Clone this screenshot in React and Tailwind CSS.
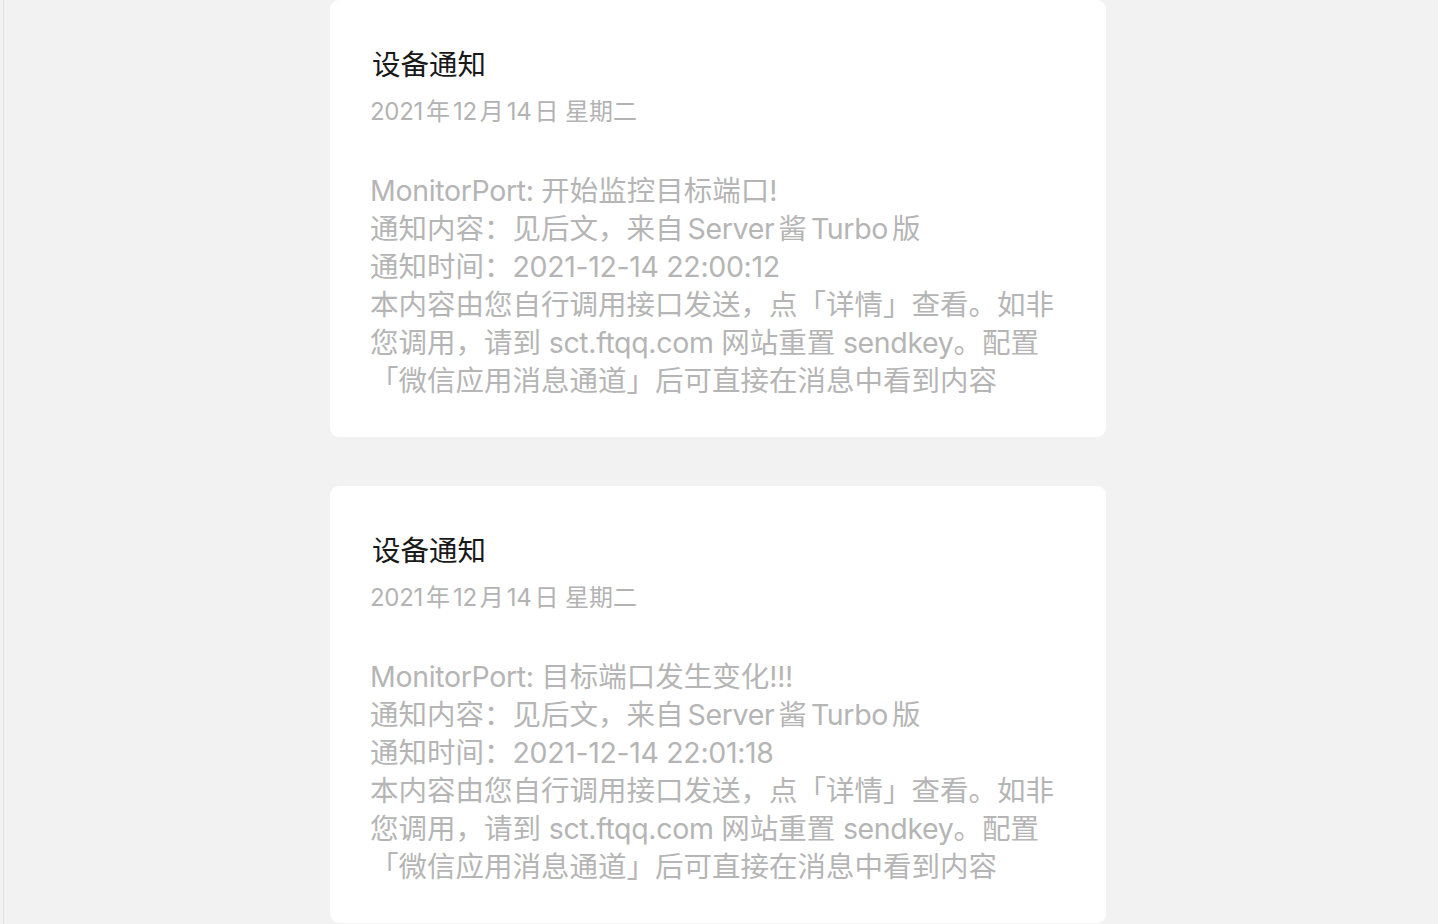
import React from "react";

const font = { fontFamily: '"Inter", "Noto Sans CJK SC", sans-serif' };

function Latin({ s }) {
  const parts = s.split(/([A-Za-z0-9.:!\- ]+)/);
  return (
    <>
      {parts.map((p, i) =>
        i % 2 === 1 ? (
          <span key={i} className="tracking-[-0.012em]">{p}</span>
        ) : (
          <React.Fragment key={i}>{p}</React.Fragment>
        )
      )}
    </>
  );
}

function T({ s, gap }) {
  const parts = s.split("|");
  return (
    <>
      {parts.map((p, i) => (
        <React.Fragment key={i}>
          {i > 0 && <span className={gap === "s" ? "inline-block w-[3px]" : "inline-block w-[4px]"} />}
          <Latin s={p} />
        </React.Fragment>
      ))}
    </>
  );
}

function Card({ lines }) {
  return (
    <div className="w-[776px] bg-white rounded-[9px] pt-[45px] pb-[37px] pl-[40px] pr-[40px]">
      <div className="text-[28.5px] leading-[40px] text-[#191919] pl-[2px]">设备通知</div>
      <div className="mt-[10px] text-[24px] leading-[34px] text-[#b3b3b3]">
        <T s="2021|年|12|月|14|日 星期二" gap="s" />
      </div>
      <div className="mt-[43px] text-[28.5px] leading-[38px] text-[#b5b5b5]">
        {lines.map((l, i) => (
          <div key={i} className="whitespace-nowrap">
            <T s={l} />
          </div>
        ))}
      </div>
    </div>
  );
}

export default function App() {
  const a = [
    "MonitorPort: 开始监控目标端口!",
    "通知内容：见后文，来自|Server|酱|Turbo|版",
    "通知时间：2021-12-14 22:00:12",
    "本内容由您自行调用接口发送，点「详情」查看。如非",
    "您调用，请到 sct.ftqq.com 网站重置 sendkey。配置",
    "「微信应用消息通道」后可直接在消息中看到内容",
  ];
  const b = [
    "MonitorPort: 目标端口发生变化!!!",
    "通知内容：见后文，来自|Server|酱|Turbo|版",
    "通知时间：2021-12-14 22:01:18",
    "本内容由您自行调用接口发送，点「详情」查看。如非",
    "您调用，请到 sct.ftqq.com 网站重置 sendkey。配置",
    "「微信应用消息通道」后可直接在消息中看到内容",
  ];
  return (
    <div className="w-[1438px] h-[924px] overflow-hidden bg-[#f2f2f2]" style={font}>
      <div className="ml-[3px] h-full border-l border-[#e2e2e2] pl-[326px] flex flex-col gap-[49px]">
        <Card lines={a} />
        <Card lines={b} />
      </div>
    </div>
  );
}
